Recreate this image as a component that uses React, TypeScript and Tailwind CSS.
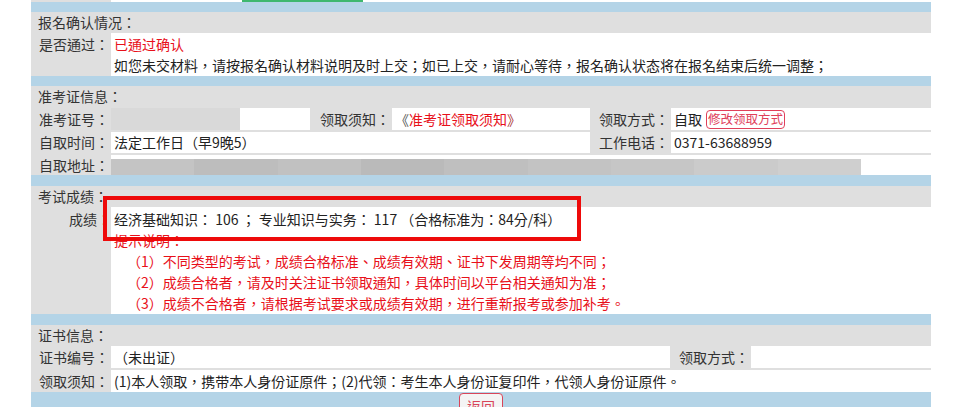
const Band = ({ h }: { h: string }) => <div className={`${h} bg-[#b4d4e7]`} />;

const Header = ({ title, h }: { title: string; h: string }) => (
  <div className={`${h} flex items-center pl-[7px] text-[#333]`}>{title}</div>
);

const Label = ({ text, w = "w-[80px]" }: { text: string; w?: string }) => (
  <div className={`${w} shrink-0 flex items-center justify-end pr-[2px] text-[#333]`}>{text}</div>
);

const blurBar = ["#c4c4c4", "#bdbdbd", "#c1c1c1", "#bababa", "#bfbfbf", "#c3c3c3", "#c6c6c6", "#cbcbcb", "#cfcfcf"];

export default function App() {
  return (
    <div className="h-[407px] overflow-hidden bg-white font-['Noto_Sans_CJK_TC',sans-serif] text-[14px] text-[#222] [text-spacing-trim:space-all]">
      <div className="ml-[31px] w-[900px] bg-[#dfdfdf]">
        {/* tail of the block above */}
        <div className="flex h-[2px]">
          <div className="w-[80px]" />
          <div className="w-[131px] bg-white" />
          <div className="w-[121px] bg-[#3fb86f]" />
          <div className="flex-1 bg-white" />
        </div>

        <Band h="h-[10px]" />
        <Header title="报名确认情况：" h="h-[21px]" />
        <div className="flex h-[43px]">
          <div className="w-[80px] shrink-0 pt-[1px] pr-[2px] text-right leading-[21px] text-[#333]">是否通过：</div>
          <div className="flex-1 bg-white pl-[3px] pt-[1px] leading-[21px]">
            <div className="text-[#e8101a]">已通过确认</div>
            <div>如您未交材料，请按报名确认材料说明及时上交；如已上交，请耐心等待，报名确认状态将在报名结束后统一调整；</div>
          </div>
        </div>

        <Band h="h-[10px]" />
        <div className="flex flex-col gap-[2px]">
          <Header title="准考证信息：" h="h-[20px]" />
          <div className="flex h-[22px]">
            <Label text="准考证号：" />
            <div className="flex w-[199px]">
              <div className="w-[129px] bg-[#d9d9d9]" />
              <div className="flex-1 bg-white" />
            </div>
            <Label text="领取须知：" w="w-[82px]" />
            <div className="flex w-[198px] items-center bg-white pl-[3px]">
              <span className="text-[#555]">《</span>
              <span className="text-[#e8101a]">准考证领取须知</span>
              <span className="text-[#a33]">》</span>
            </div>
            <Label text="领取方式：" w="w-[81px]" />
            <div className="flex flex-1 items-center bg-white pl-[3px]">
              <span>自取</span>
              <span className="ml-[4px] inline-flex h-[19px] items-center rounded-[4px] border border-[#e0405a] px-[1px] text-[12.5px] text-[#e0405a]">
                修改领取方式
              </span>
            </div>
          </div>
          <div className="flex h-[21px]">
            <Label text="自取时间：" />
            <div className="flex w-[479px] items-center bg-white pl-[3px]">法定工作日（早9晚5）</div>
            <Label text="工作电话：" w="w-[81px]" />
            <div className="flex flex-1 items-center bg-white pl-[3px]">0371-63688959</div>
          </div>
          <div className="flex h-[20px]">
            <Label text="自取地址：" />
            <div className="flex-1 bg-white pt-[4px]">
              <div className="flex h-full w-[750px]">
                {blurBar.map((c, i) => (
                  <div key={i} className="flex-1" style={{ backgroundColor: c }} />
                ))}
              </div>
            </div>
          </div>
        </div>

        <Band h="h-[11px]" />
        <div className="relative">
          <Header title="考试成绩：" h="h-[21px]" />
          <div className="flex h-[107px]">
            <div className="w-[80px] shrink-0 pt-[2px] text-right leading-[21px] text-[#333]">成绩：</div>
            <div className="flex-1 bg-white pl-[3px] pt-[2px] leading-[21px]">
              <div className="whitespace-pre">经济基础知识： 106 ； 专业知识与实务： 117 （合格标准为：84分/科）</div>
              <div className="text-[#e8101a]">提示说明：</div>
              <div className="pl-[13px] text-[#e8101a]">
                <div>（1）不同类型的考试，成绩合格标准、成绩有效期、证书下发周期等均不同；</div>
                <div>（2）成绩合格者，请及时关注证书领取通知，具体时间以平台相关通知为准；</div>
                <div>（3）成绩不合格者，请根据考试要求或成绩有效期，进行重新报考或参加补考。</div>
              </div>
            </div>
          </div>
          <div className="absolute left-[72px] top-[10px] h-[45px] w-[478px] border-[4px] border-[#ee0a0a]" />
        </div>

        <Band h="h-[11px]" />
        <Header title="证书信息：" h="h-[20px]" />
        <div className="flex flex-col gap-[2px] pt-[1px]">
          <div className="flex h-[22px]">
            <Label text="证书编号：" />
            <div className="flex w-[559px] items-center bg-white pl-[3px]">（未出证）</div>
            <Label text="领取方式：" w="w-[81px]" />
            <div className="flex-1 bg-white" />
          </div>
          <div className="flex h-[22px]">
            <Label text="领取须知：" />
            <div className="flex flex-1 items-center bg-white pl-[3px]">
              (1)本人领取，携带本人身份证原件；(2)代领：考生本人身份证复印件，代领人身份证原件。
            </div>
          </div>
        </div>

        <div className="flex h-[30px] justify-center bg-[#b4d4e7] pt-[1px]">
          <button className="h-[26px] rounded-[4px] border border-[#d9455a] bg-[#f4f4f4] px-[7px] text-[14px] leading-[22px] text-[#d9455a]">
            返回
          </button>
        </div>
      </div>
    </div>
  );
}
